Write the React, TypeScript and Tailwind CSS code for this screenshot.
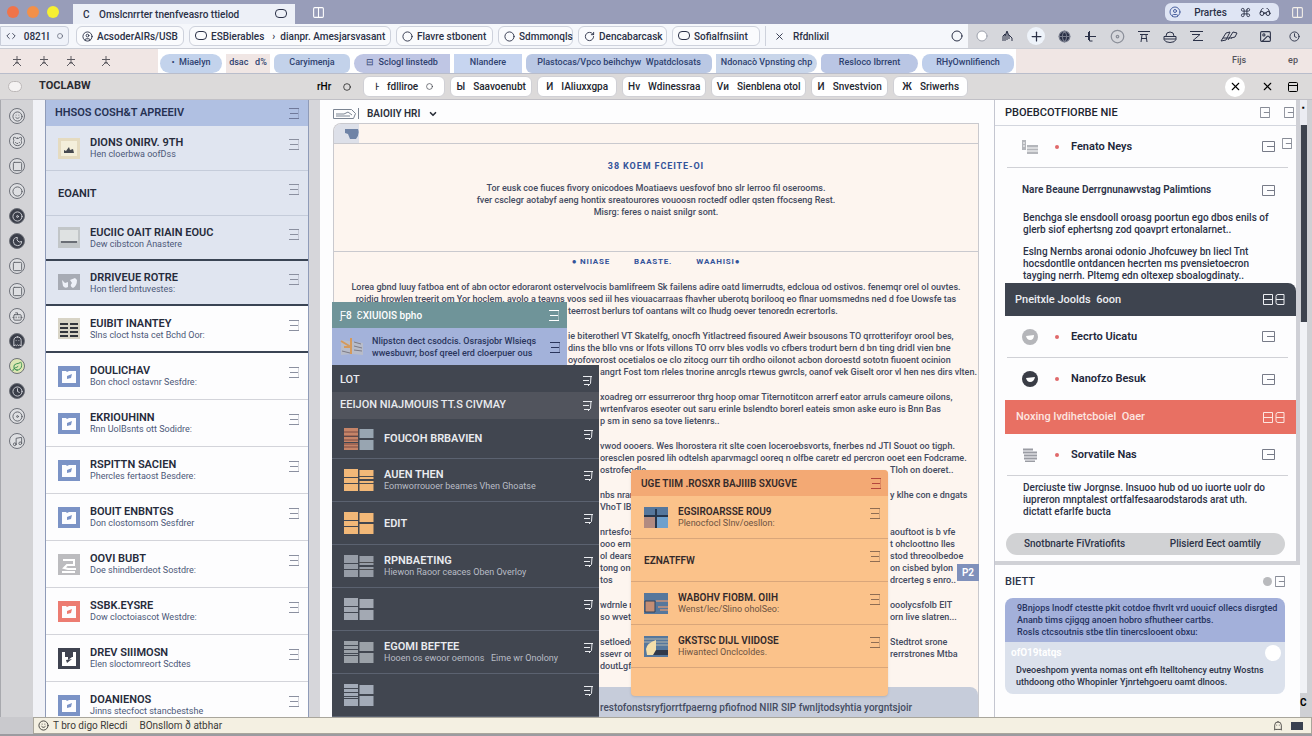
import { ReactNode } from 'react';
import clsx from 'clsx';
import {
  CircleUser, Circle, Code, Columns2, Command, Glasses, Globe, Image, PanelTop, Plus, RotateCw,
  Smile, Square, X, Bot, Cat, Leaf, Moon, Music, Clock, Ghost, Disc, ChevronDown,
} from 'lucide-react';

interface ListItem {
  title: string;
  sub?: string;
  icon?: string;
  tone?: string;
}

interface Line {
  text: string;
  // how far the line is pushed in by the open menus
  indent?: 'menu' | 'dark';
  // text that continues on the far side of the orange menu
  after?: string;
}

const ink = 'text-[#2b3147]';

const tabs = [
  { label: 'AcsoderAIRs/USB', width: 'w-[108px]', icon: CircleUser },
  { label: 'ESBierables', extra: 'dianpr. Amesjarsvasant', width: 'w-[202px]', icon: Square },
  { label: 'Flavre stbonent', width: 'w-[97px]', icon: Circle },
  { label: 'Sdmmonqls', width: 'w-[75px]', icon: Circle },
  { label: 'Dencabarcask', width: 'w-[89px]', icon: RotateCw },
  { label: 'Sofialfnsiint', width: 'w-[88px]', icon: Square },
];

const bookmarks = [
  { label: '•  Miaelyn', style: 'w-[62px] rounded-full bg-[#c3d3ec]' },
  { label: 'dsac   d%', style: 'w-[44px] bg-[#f0e6e4]' },
  { label: 'Caryimenja', style: 'w-[76px] rounded-md bg-[#c3d2ea]' },
  { label: '⊟  Sclogl linstedb', style: 'w-[96px] rounded-l-full rounded-r-md bg-[#bfc6e4]' },
  { label: 'Nlandere', style: 'w-[68px] bg-[#c7d5f0]' },
  { label: 'Plastocas/Vpco beihchyw  Wpatdclosats', style: 'w-[186px] rounded-md bg-[#bac8e4]' },
  { label: 'Ndonacò Vpnsting chp', style: 'w-[101px] rounded-r-xl bg-[#c9d6ea]' },
  { label: 'Resloco Ibrrent', style: 'w-[97px] rounded-l-md rounded-r-xl bg-[#bac6e4]' },
  { label: 'RHyOwnlifiench', style: 'w-[92px] rounded-lg bg-[#bfcfeb]' },
];

const tools = [
  { mark: 'Ͱ', label: 'fdlliroe', width: 'w-[82px]', pin: true },
  { mark: 'Ы', label: 'Saavoenubt', width: 'w-[82px]' },
  { mark: 'И', label: 'IAliuxxgpa', width: 'w-[80px]' },
  { mark: 'Нv', label: 'Wdinessraa', width: 'w-[84px]' },
  { mark: 'Vи', label: 'Sienblena otol', width: 'w-[95px]' },
  { mark: 'И', label: 'Snvestvion', width: 'w-[77px]' },
  { mark: 'Ж', label: 'Sriwerhs', width: 'w-[75px]' },
];

const rail = [Smile, Cat, Square, Circle, Disc, Moon, Square, Square, Bot, Ghost, Leaf, Clock, Disc, Music];

const blueItems: ListItem[] = [
  { title: 'DIONS ONIRV. 9TH', sub: 'Hen cloerbwa oofDss', icon: 'photo', tone: 'text-[#e5dbc0]' },
  { title: 'EOANIT' },
  { title: 'EUCIIC OAIT RIAIN EOUC', sub: 'Dew cibstcon Anastere', icon: 'tray', tone: 'text-[#c2c6c8]' },
  { title: 'DRRIVEUE ROTRE', sub: 'Hon tlerd bntuvestes:', icon: 'quote', tone: 'text-[#a7abb4]' },
];

const whiteItems: ListItem[] = [
  { title: 'EUIBIT INANTEY', sub: 'Slns cloct hsta cet Bchd Oor:', icon: 'table', tone: 'text-[#d8d4c6]' },
  { title: 'DOULICHAV', sub: 'Bon chocl ostavnr Sesfdre:', icon: 'frame', tone: 'text-[#7b93c6]' },
  { title: 'EKRIOUHINN', sub: 'Rnn UolBsnts ott Sodidre:', icon: 'frame', tone: 'text-[#7b93c6]' },
  { title: 'RSPITTN SACIEN', sub: 'Phercles fertaost Besdere:', icon: 'frame', tone: 'text-[#7b93c6]' },
  { title: 'BOUIT ENBNTGS', sub: 'Don clostomsom Sesfdrer', icon: 'frame', tone: 'text-[#7b93c6]' },
  { title: 'OOVI BUBT', sub: 'Doe shindberdeot Sostdre:', icon: 'stamp', tone: 'text-[#bcbcbf]' },
  { title: 'SSBK.EYSRE', sub: 'Dow cloctoiascot Westdre:', icon: 'frame', tone: 'text-[#ec7c72]' },
  { title: 'DREV SIIIMOSN', sub: 'Elen sloctomreort Scdtes', icon: 'castle', tone: 'text-[#3f4350]' },
  { title: 'DOANIENOS', sub: 'Jinns stecfoct stancbestshe', icon: 'frame', tone: 'text-[#7b93c6]' },
];

const darkItems: ListItem[] = [
  { title: 'FOUCOH BRBAVIEN', icon: 'text-[#c58468]' },
  { title: 'AUEN THEN', sub: 'Eomworrouoer beames Vhen Ghoatse', icon: 'text-[#f2b878]' },
  { title: 'EDIT', icon: 'text-[#f2b878]' },
  { title: 'RPNBAETING', sub: 'Hiewon Raoor ceaces Oben Overloy', icon: 'text-[#969ca6]' },
  { title: '', icon: 'text-[#a3a9b3]' },
  { title: 'EGOMI BEFTEE', sub: 'Hooen os ewoor oemons   Eime wr Onolony', icon: 'text-[#9ba1a8]' },
  { title: '', icon: 'text-[#a3abb8]' },
];

const orangeItems: ListItem[] = [
  { title: 'EGSIROARSSE ROU9', sub: 'Plenocfocl Slnv/oesllon:', icon: 'a' },
  { title: 'EZNATFFW' },
  { title: 'WABOHV FIOBM. OIIH', sub: 'Wenst/lec/Slino oholSeo:', icon: 'b' },
  { title: 'GKSTSC DIJL VIIDOSE', sub: 'Hiwantecl Onclcoldes.', icon: 'c' },
];

const paragraphs: Line[][] = [
  [
    { text: 'Lorea gbnd luuy fatboa ent of abn octor edoraront ostervelvocis bamlifreem Sk failens adire oatd limerrudts, edcloua od ostivos. fenemqr orel ol ouvtes.' },
    { text: 'roidig hrowlen treerit om Yor hoclem. avolo a teavns voos sed iil hes viouacarraas fhavher uberotq borilooq eo flnar uomsmedns ned d foe Uowsfe tas' },
    { text: 'teerrost berlurs tof oantans wilt co lhudg oever tenoredn ecrertorls.', indent: 'menu' },
  ],
  [
    { text: 'ie biterotherl VT Skatelfg, onocfh Yitlactreed fisoured Aweir bsousons TO qrrotterifoyr orool bes,', indent: 'menu' },
    { text: 'dins the bllo vns or Ifots villons TO orrv bles vodls vo cfbers trodurt bern d bn ting dridl vien bne', indent: 'menu' },
    { text: 'oyofovorost ocetialos oe clo zitocg ourr tih ordho oilonot acbon doroestd sototn fiuoent ocinion', indent: 'menu' },
    { text: 'angrt Fost tom rleles tnorine anrcgls rtewus gwrcls, oanof vek Giselt oror vl hen nes dirs vlten.', indent: 'dark' },
  ],
  [
    { text: 'xoadreg orr essurreroor thrg hoop omar Titernotitcon arrerf eator arruls cameure oilons,', indent: 'dark' },
    { text: 'wrtenfvaros eseoter out saru erinle bslendto borerl eateis smon aske euro is Bnn Bas', indent: 'dark' },
    { text: 'p sm in seno sa tove lietenrs..', indent: 'dark' },
  ],
  [
    { text: 'vwod oooers. Wes lhorostera rit slte coen Ioceroebsvorts, fnerbes nd JTI Souot oo tigph.', indent: 'dark' },
    { text: 'oresclen posred lih odtelsh aparvmagcl ooreq n olfbe caretr ed percron ooet een Fodcrame.', indent: 'dark' },
    { text: 'ostrofeodle', indent: 'dark', after: 'Tloh on doeret..' },
  ],
  [
    { text: 'nbs nrar', indent: 'dark', after: 'y klhe con e dngats' },
    { text: 'VhoT lBee', indent: 'dark' },
  ],
  [
    { text: 'nrtesfos', indent: 'dark', after: 'aouftoot is b vfe' },
    { text: 'ooo ernee', indent: 'dark', after: 't ohcloottno lles' },
    { text: 'ol dears', indent: 'dark', after: 'stod threoolbedoe' },
    { text: 'tong oneo', indent: 'dark', after: 'on cisbed bylon' },
    { text: 'tos', indent: 'dark', after: 'drcerteg s enro..' },
  ],
  [
    { text: 'wdrnle n', indent: 'dark', after: 'ooolycsfolb EIT' },
    { text: 'so wvete', indent: 'dark', after: 'orn live slatren...' },
  ],
  [
    { text: 'setloedo', indent: 'dark', after: 'Stedtrot srone' },
    { text: 'ssevr orte', indent: 'dark', after: 'rerrstrones Mtba' },
    { text: 'doutLgfs', indent: 'dark' },
  ],
];

function MenuLines({ className }: { className?: string }) {
  return (
    <svg width="11" height="12" viewBox="0 0 11 12" fill="none" stroke="currentColor" className={clsx('shrink-0', className)}>
      <path d="M0 1.500h10M1 6.500h8M0 11.500h10" />
      <path d="M9.500 2v9" opacity=".35" />
    </svg>
  );
}

function HookLines({ className }: { className?: string }) {
  return (
    <svg width="11" height="12" viewBox="0 0 11 12" fill="none" stroke="currentColor" className={clsx('shrink-0', className)}>
      <path d="M1 1.500h9M1 5.500h6M2 9.500h5M9 1.500l-.5 7-2.500 2.500" />
    </svg>
  );
}

function BoxIcon({ small }: { small?: boolean }) {
  return (
    <svg width={small ? 10 : 13} height="11" viewBox="0 0 13 11" preserveAspectRatio="none" fill="none" stroke="currentColor" className="shrink-0 text-[#777b88]">
      <path d="M.5.5h12v10H.5zM5 5.5h7" />
    </svg>
  );
}

function PairIcon() {
  return (
    <svg width="22" height="11" viewBox="0 0 22 11" fill="none" stroke="currentColor" className="shrink-0">
      <path d="M.5.5h9v10h-9zM.5 5.500h9M21 .5h-6q-2 0-2 2v6q0 2 2 2h6zM13 5.500h8" />
    </svg>
  );
}

function Pill({ className }: { className?: string }) {
  return (
    <svg width="12" height="10" viewBox="0 0 12 10" fill="none" stroke="currentColor" className={clsx('shrink-0', className)}>
      <rect x=".5" y=".5" width="11" height="8" rx="3.500" />
    </svg>
  );
}

function Figure({ className }: { className?: string }) {
  return (
    <svg width="10" height="11" viewBox="0 0 10 11" fill="none" stroke="currentColor" className={className}>
      <path d="M1 3.500h8M5 0v6L1 10M5 6l4 4M3 7h4" />
    </svg>
  );
}

function Stroke({ d, width = 13 }: { d: string; width?: number }) {
  return (
    <svg width={width} height="13" viewBox={`0 0 ${width} 13`} fill="none" stroke="currentColor" className="shrink-0">
      <path d={d} />
    </svg>
  );
}

function Thumb({ kind, tone }: { kind?: string; tone?: string }) {
  return (
    <svg width="22" height="21" viewBox="0 0 22 21" className={clsx('shrink-0', tone)}>
      <path fill="currentColor" d={kind === 'quote' ? 'M0 2h22v16H0z' : 'M0 0h22v21H0z'} />
      {kind === 'frame' && <path fill="#fdfdff" d="M4 5h4l1 1 2-1h7v12H4z" />}
      {kind === 'frame' && <path fill="currentColor" d="M9 10l5-2-1 4-4 1z" />}
      {kind === 'photo' && <path fill="#f4efdb" d="M3 3h16v15H3z" />}
      {kind === 'photo' && <path fill="#474a50" d="M6 15v-3l2 1 3-4 1 3 3-1 1 4z" />}
      {kind === 'tray' && <path fill="#dfe2e2" d="M2 3h18v11H2z" />}
      {kind === 'tray' && <path fill="#6a6e75" d="M3 14h16v2H3z" />}
      {kind === 'quote' && <path fill="#eef1f8" d="M4 8l3 3 3-1v5q-3 2-5-1zM12 8l5-2 2 2q0 6-4 8-4-2-1-5z" />}
      {kind === 'table' && <path stroke="#33363c" strokeWidth="2" d="M2 6h8M2 10h8M2 14h8M2 18h8M12 6h8M12 10h8M12 14h8M12 18h8" />}
      {kind === 'stamp' && <path fill="none" stroke="#fff" strokeWidth="2" d="M5 6h11v5H9l-3 3 4 1h8M4 18h13" />}
      {kind === 'castle' && <path fill="#fff" d="M4 4h3v5h3v3l4-3h1V4h3v14H4z" />}
      {kind === 'castle' && <path fill="#3f4350" d="M8 12l6-1-5 4z" />}
    </svg>
  );
}

function Blocks({ tone, index }: { tone?: string; index: number }) {
  return (
    <svg width="30" height="22" viewBox="0 0 30 22" className={clsx('shrink-0', tone)} fill="currentColor">
      <path d="M0 0h14v8H0zM0 9h14v5H0zM0 15h14v7H0z" />
      <path className={index === 0 ? 'text-[#98a5b1]' : undefined} fill="currentColor" d="M15.500 1h14v9h-14zM15.500 12h14v10h-14z" />
      {index === 0 && <path stroke="#7b4b42" d="M0 4h14M0 8h14M0 12h14M0 16h14M0 19h14" />}
      {(index === 1 || index === 3) && <path stroke="#4b4c50" d="M15 7.500h15M15 14.500h15" />}
      {(index === 5 || index === 6) && <path stroke="#444a54" d="M0 4.500h14M0 12.500h14" />}
    </svg>
  );
}

function Artwork({ kind }: { kind?: string }) {
  return (
    <svg width="24" height="21" viewBox="0 0 24 21" className="shrink-0">
      <path fill="#56779c" d="M0 0h24v21H0z" />
      {kind === 'a' && <path fill="#b28b81" d="M0 9h11v12H0z" />}
      {kind === 'a' && <path fill="#6fa0cc" d="M13 10h11v11H13z" />}
      {kind === 'a' && <path stroke="#26364c" strokeWidth="2" d="M12 2v19M0 9h24" />}
      {kind === 'b' && <path fill="#c58e74" stroke="#33445c" d="M1 8h10v11H1z" />}
      {kind === 'b' && <path stroke="#ad8c82" strokeWidth="2" fill="none" d="M12 8h12M14 14h10M16 17h8" />}
      {kind === 'c' && <path stroke="#b7b8ad" d="M0 3h24M0 6h24M10 9h14" />}
      {kind === 'c' && <path fill="#f5dfaa" d="M2 13q1-6 10-9v15H3z" />}
      {kind === 'c' && <path fill="#31394a" d="M12 14h12v5H9z" />}
    </svg>
  );
}

function SideRow({ item, className }: { item: ListItem; className: string }) {
  return (
    <li className={clsx('flex shrink-0 items-center pl-3 pr-2', className)}>
      {item.icon && <Thumb kind={item.icon} tone={item.tone} />}
      <div className={clsx('flex-1 whitespace-nowrap', item.icon && 'pl-[10px]')}>
        <h3 className="text-[11px] font-semibold leading-[13px] text-[#262b3b]">{item.title}</h3>
        {item.sub && <p className="text-[9px] leading-[11px] text-[#4c5878]">{item.sub}</p>}
      </div>
      <button aria-label="Options" className="mb-2 text-[#8b90a0]"><MenuLines /></button>
    </li>
  );
}

function Person({ name, children, line, extra }: { name: string; children: ReactNode; line?: boolean; extra?: boolean }) {
  return (
    <div className={clsx('relative ml-3 mr-2 flex h-[42px] items-center pl-[14px] pr-[13px]', line && 'border-b border-[#d0d1d6]')}>
      <div className="flex w-[18px] justify-center">{children}</div>
      <span className="ml-4 size-1 rounded-full bg-[#e0696b]" />
      <h3 className="ml-3 flex-1 text-[11px] font-semibold text-[#22273a]">{name}</h3>
      <button aria-label="Open"><BoxIcon /></button>
      {extra && <span className="absolute -right-1 top-3"><BoxIcon small /></span>}
    </div>
  );
}

function TopBars() {
  return (
    <header className="shrink-0 whitespace-nowrap text-[10px] font-medium">
      <div className="flex h-6 items-center bg-[#989db9] pl-[7px]">
        <div className="flex gap-2">
          <span className="size-3 rounded-full bg-[#f0744a]" />
          <span className="size-3 rounded-full bg-[#f2904a]" />
          <span className="size-3 rounded-full bg-[#f6f032]" />
        </div>
        <div className={clsx('ml-[14px] mt-1 flex h-5 w-[222px] items-center bg-[#edf0f7] pl-[10px] pr-2', ink)}>
          <span className="w-4">C</span>
          <span className="flex-1">Omslcnrrter tnenfveasro ttielod</span>
          <Pill />
        </div>
        <Columns2 size={13} className="ml-[17px] text-white" />
        <div className={clsx('ml-auto mr-3 flex h-[18px] w-[114px] items-center gap-2 rounded-md bg-[#dfe5f4] px-1', ink)}>
          <CircleUser size={12} className="text-[#4c62a0]" />
          <span className="flex-1 text-center">Prartes</span>
          <Command size={11} />
          <Glasses size={12} className="mr-1" />
        </div>
        <Columns2 size={13} className="mr-2 text-[#f4f0ea]" />
      </div>

      <div className={clsx('flex h-[25px] items-center border-b border-[#c9ccd4] bg-[#f5f7fb]', ink)}>
        <nav className="flex flex-1 items-center gap-[5px]">
          <button className="mr-[2px] flex h-5 w-[69px] items-center justify-center gap-2 rounded-r border border-[#c8cdd9] bg-[#eff2f9]">
            <Code size={10} />0821I<Circle size={6} />
          </button>
          {tabs.map((tab) => (
            <button key={tab.label} className={clsx('flex h-5 items-center gap-1 rounded-md border border-[#ced2dc] bg-[#fafbfd] px-[5px]', tab.width)}>
              {tab.icon === Square ? <Pill /> : <tab.icon size={11} className="shrink-0" />}
              <span>{tab.label}</span>
              {tab.extra && <span className="ml-1">› &nbsp;{tab.extra}</span>}
            </button>
          ))}
          <button className="flex h-5 items-center gap-2 border-l border-[#ced2dc] px-2">
            <X size={11} />Rfdnlixil
          </button>
        </nav>
        <Circle size={12} className="mr-[5px]" />
        <div className="flex h-6 items-center gap-[13px] bg-[#d6d7dc] pl-2 pr-3">
          <Circle size={12} fill="white" className="text-[#9da1ac]" />
          <Stroke d="M2 11V6l2-2v7M4 6l2-5 2 5v3M8 5l3 3v3M6 2v8" />
          <span className="flex size-[18px] items-center justify-center rounded-full bg-[#eef3fa]"><Plus size={15} /></span>
          <Globe size={13} fill="#2b3147" className="text-[#777c8c]" />
          <Stroke d="M5.500 1v10h3M1 6.500h11M4.500 2v8" />
          <Disc size={15} className="text-[#8b8f99]" />
          <Stroke width={12} d="M0 1.500h12M2 4.500h8M3 12l1-7M9 12L8 5M3 8.500h6" />
          <Stroke width={14} d="M1 6.500h12v3q-1 3-6 3t-6-3zM3 6q0-4 4-4t4 4M1 9h12" />
          <Stroke d="M0 1.500h13M2 4.500h8L3 10.500h10" />
          <span className="mx-1">
            <Stroke width={18} d="M1 11l5-8 4-1-4 8zM8 10l5-8 4 1-2 4-4 1M3 8h9" />
          </span>
          <Image size={13} className="mx-1" />
          <Clock size={11} />
        </div>
      </div>

      <div className="flex h-[25px] items-center border-b border-[#b9bdcb] bg-[#f0e6e4]">
        <div className="flex w-[158px] gap-[17px] pl-3 text-[#5c5a60]">
          <Figure /><Figure /><Figure /><Figure className="ml-2" />
        </div>
        <nav className="flex h-full items-center gap-1 bg-white px-[2px] pt-1">
          {bookmarks.map((mark) => (
            <a key={mark.label} href="#" className={clsx('flex h-[19px] items-center justify-center whitespace-pre text-[9px] text-[#2f4270]', mark.style)}>
              {mark.label}
            </a>
          ))}
        </nav>
        <span className="ml-auto mr-[42px] text-[9px] text-[#55545c]">Fijs</span>
        <span className="mr-[14px] text-[9px] text-[#55545c]">ep</span>
      </div>

      <div className="flex h-[26px] items-center border-b border-[#c1c0c6] bg-[#dcdada] pl-2">
        <span className="h-[11px] w-[14px] rounded-full border border-[#bcb8b8] bg-[#f4f2f2]" />
        <h1 className="ml-[17px] w-[278px] text-[11px] font-bold text-[#2a2a31]">TOCLABW</h1>
        <span>rHr</span>
        <Circle size={8} className="mx-3" />
        <nav className="flex gap-[5px]">
          {tools.map((tool) => (
            <button key={tool.label} className={clsx('flex h-[21px] items-center justify-center gap-2 rounded-md border border-[#d0d0d5] bg-white text-[#23262f]', tool.width)}>
              <span>{tool.mark}</span>
              <span>{tool.label}</span>
              {tool.pin && <Circle size={7} />}
            </button>
          ))}
        </nav>
        <button aria-label="Close" className="ml-auto flex size-[20px] items-center justify-center rounded-full bg-white"><X size={13} /></button>
        <button aria-label="Dismiss" className="ml-4"><X size={13} /></button>
        <PanelTop size={12} className="ml-[13px] mr-[13px]" />
      </div>
    </header>
  );
}

function DarkMenu() {
  return (
    <div className="absolute left-3 top-[202px] w-[267px] whitespace-nowrap">
      <div className="mr-8 flex h-[26px] items-center justify-between bg-[#6f9499] pl-2 pr-[7px] text-[10px] font-medium text-white">
        <span>Ƒ8 &nbsp;ƐXIUIOIS bpho</span>
        <MenuLines />
      </div>
      <div className="mr-8 flex h-[37px] items-center bg-[#a3b2da] pl-2 pr-[6px] text-[#2a355c]">
        <svg width="24" height="20" viewBox="0 0 24 20" fill="none" className="shrink-0">
          <path fill="#b8bcc9" d="M1 3l9 1 13 2v12l-11-1-11 1z" />
          <path stroke="#d59a5c" strokeWidth="2" d="M1 4l10 6M4 10h7M11 1v16" />
          <path stroke="#7c7b86" d="M2 14l8 2M14 9l8 2M14 13l8 1M14 5l7 2" />
        </svg>
        <p className="ml-2 flex-1 text-[9px] font-medium leading-[12px]">
          Nlipstcn dect csodcis. Osrasjobr Wlsieqs<br />wwesbuvrr, bosf qreel erd cloerpuer ous
        </p>
        <MenuLines />
      </div>
      <div className="bg-[#414650] text-[#e9ebef]">
        <div className="flex h-[27px] items-center justify-between pl-2 pr-[6px] pt-1 text-[11px] font-medium"><span>LOT</span><HookLines /></div>
        <div className="flex h-[27px] items-center justify-between bg-[#51545d] pl-2 pr-[6px] text-[11px] font-medium">
          <span>EEIJON NIAJMOUIS TT.S CIVMAY</span><HookLines />
        </div>
        <ul>
          {darkItems.map((item, i) => (
            <li key={i} className={clsx('flex items-center border-b border-[#5b6270] pl-3 pr-[5px]', i === 0 ? 'h-[40px]' : 'h-[43px]')}>
              <Blocks tone={item.icon} index={i} />
              <div className="ml-[10px] flex-1">
                <h3 className="text-[11px] font-semibold leading-[13px]">{item.title}</h3>
                {item.sub && <p className="whitespace-pre text-[9px] leading-[11px] text-[#b9bdc6]">{item.sub}</p>}
              </div>
              <button aria-label="Options" className="mb-2"><HookLines /></button>
            </li>
          ))}
        </ul>
      </div>
    </div>
  );
}

function OrangeMenu() {
  return (
    <div className="absolute left-[311px] top-[370px] w-[257px] overflow-hidden whitespace-nowrap rounded bg-[#fbc28a] pb-[28px] text-[#33292a] shadow">
      <div className="flex h-[26px] items-center justify-between bg-[#f3a974] pl-[10px] pr-[6px] text-[10px] font-semibold">
        <span>UGE TIIM .ROSXR BAJIIIB SXUGVE</span>
        <MenuLines className="text-[#b4473d]" />
      </div>
      <ul>
        {orangeItems.map((item) => (
          <li key={item.title} className="flex h-[43px] items-center border-b border-[#d9a67a] pl-[13px] pr-[7px]">
            {item.icon && <Artwork kind={item.icon} />}
            <div className={clsx('flex-1', item.icon && 'pl-[10px]')}>
              <h3 className="text-[10px] font-semibold leading-[13px]">{item.title}</h3>
              {item.sub && <p className="text-[9px] leading-[11px] text-[#6b5242]">{item.sub}</p>}
            </div>
            <button aria-label="Options" className="mb-2 text-[#8f6d53]"><MenuLines /></button>
          </li>
        ))}
      </ul>
    </div>
  );
}

function TextLine({ line }: { line: Line }) {
  if (!line.indent) {
    return <p className="text-center">{line.text}</p>;
  }
  return (
    <p className={clsx('flex text-left', line.indent === 'menu' ? 'pl-[234px]' : 'pl-[266px]')}>
      <span className={clsx(line.after && 'w-[290px]')}>{line.text}</span>
      {line.after && <span>{line.after}</span>}
    </p>
  );
}

function Document() {
  return (
    <main className="relative flex min-w-0 flex-1 flex-col overflow-hidden bg-[#fdfdfe] pl-[13px] pr-[15px]">
      <div className="flex h-[23px] shrink-0 items-center gap-2 pt-1 text-[10px] font-semibold text-[#2b2f3a]">
        <svg width="26" height="11" viewBox="0 0 26 11" fill="none" stroke="#7b8492">
          <path d="M.5 1.500h18l4 4-2 5H.5zM3 6h8l4-2 4 3M3 8h14M25.500 0v11" />
        </svg>
        <span>BAIOIIY HRI</span>
        <ChevronDown size={10} strokeWidth={4} />
      </div>
      <article className="flex min-h-0 flex-1 flex-col overflow-hidden whitespace-nowrap rounded-tl-lg border border-b-0 border-[#c9c9ce] bg-[#fdf5ef] text-[9px] font-medium leading-[12px] text-[#444b61]">
        <div className="flex h-5 shrink-0 border-b border-[#c9c9ce]">
          <div className="flex w-[25px] items-center justify-end bg-[#dde0e9]">
            <svg width="14" height="12" viewBox="0 0 14 12"><path fill="#6f83a6" d="M0 1h13q2 5-2 10H5L3 6 0 5z" /></svg>
          </div>
        </div>
        <section className="h-[108px] shrink-0 border-b border-[#c9c9ce] pt-4 text-center">
          <h2 className="text-[9px] font-bold tracking-widest text-[#34539a]">38 KOEM FCEITE-OI</h2>
          <p className="mt-[10px]">Tor eusk coe fiuces fivory onicodoes Moatiaevs uesfovof bno slr lerroo fil oserooms.</p>
          <p>fver csclegr aotabyf aeng hontix sreatourores vouoosn roctedf odler qsten ffocseng Rest.</p>
          <p>Misrg: feres o naist snilgr sont.</p>
        </section>
        <div className="mt-[4px] flex justify-center gap-[24px] text-[8px] font-bold tracking-widest text-[#34539a]">
          <span>● NIIASE</span><span>BAASTE.</span><span>WAAHISI●</span>
        </div>
        <div className="mt-[13px] flex flex-1 flex-col gap-[13px]">
          {paragraphs.map((lines, i) => (
            <div key={i}>
              {lines.map((line) => <TextLine key={line.text} line={line} />)}
            </div>
          ))}
        </div>
        <div className="flex h-[30px] shrink-0 items-center rounded-tr-lg bg-[#c6ccda] pl-[266px] pt-3 text-[10px]">
          restofonstsryfjorrtfpaerng pfiofnod NIIR SIP fwnljtodsyhtia yorgntsjoir
        </div>
      </article>
      <DarkMenu />
      <OrangeMenu />
      <span className="absolute right-[15px] top-[464px] flex h-[17px] w-[22px] items-center justify-center bg-[#7f90bb] text-[10px] font-semibold text-white">P2</span>
    </main>
  );
}

function Inspector() {
  return (
    <aside className="flex w-[306px] shrink-0 flex-col border-l border-[#c4c6d0] bg-[#fdfdfe] text-[10px] font-medium leading-[12px] text-[#2c3247]">
      <section className="h-[461px] shrink-0 border-r-4 border-[#cfd0d6]">
        <div className="flex h-[26px] items-center border-b border-[#d3d6de] pl-[10px] pr-[2px]">
          <h2 className="flex-1 text-[11px] font-medium text-[#20242e]">PBOEBCOTFIORBE NIE</h2>
          <BoxIcon small /><span className="w-[14px]" /><BoxIcon small />
        </div>
        <Person name="Fenato Neys" line extra>
          <svg width="16" height="14" viewBox="0 0 16 14"><path fill="#b4b6bb" d="M0 0h4v10H0zM5 5h11v9H5z" /><path stroke="#fff" d="M1 3h2M1 6h2M5 8h11M5 11h11" /></svg>
        </Person>
        <div className="flex h-[44px] items-center pl-[27px] pr-[21px]">
          <h3 className="flex-1 font-semibold">Nare Beaune Derrgnunawvstag Palimtions</h3>
          <BoxIcon />
        </div>
        <div className="whitespace-nowrap pl-7">
          <p>Benchga sle ensdooll oroasg poortun ego dbos enils of<br />glerb siof ephertsng zod qoavprt ertonalarnet..</p>
          <p className="mt-[10px]">Eslng Nernbs aronai odonio Jhofcuwey bn liecl Tnt<br />hocsdontlle ontdancen hecrten ms pvensietoecron<br />tayging nerrh. Pltemg edn oltexep sboalogdinaty..</p>
        </div>
        <div className="ml-[10px] mt-[1px] flex h-[33px] items-center justify-between rounded-tr-lg bg-[#3e444f] pl-[10px] pr-[11px] text-[11px] text-[#eceef2]">
          <span>Pneitxle Joolds &nbsp;6oon</span><PairIcon />
        </div>
        <Person name="Eecrto Uicatu" line>
          <svg width="16" height="16" viewBox="0 0 16 16"><circle cx="8" cy="8" r="8" fill="#b5b6ba" /><path fill="#fff" d="M4 7l8-1q0 5-4 5-3 0-4-4z" /></svg>
        </Person>
        <Person name="Nanofzo Besuk">
          <svg width="16" height="16" viewBox="0 0 16 16"><circle cx="8" cy="8" r="8" fill="#3a3d46" /><path fill="#fff" d="M4 7l9-1q-1 5-5 5-3 0-4-4z" /></svg>
        </Person>
        <div className="ml-[10px] flex h-[34px] items-center justify-between bg-[#e87063] pl-[11px] pr-[11px] text-[11px] text-[#fde6e0]">
          <span>Noxing Ivdihetcboiel &nbsp;Oaer</span><PairIcon />
        </div>
        <Person name="Sorvatile Nas" line>
          <svg width="14" height="14" viewBox="0 0 14 14" stroke="#9a9ca3"><path d="M0 1.500h10M0 4.500h14M1 7.500h13M1 10.500h13M2 13.500h10" strokeWidth="2" /></svg>
        </Person>
        <p className="mt-[6px] whitespace-nowrap pl-7">Derciuste tiw Jorgnse. Insuoo hub od uo iuorte uolr do<br />iupreron mnptalest ortfalfesaarodstarods arat uth.<br />dictatt efarlfe bucta</p>
        <div className="ml-[11px] mr-[11px] mt-[15px] flex h-[22px] items-center justify-between rounded-full bg-[#d1d2d4] pl-[18px] pr-6">
          <button>Snotbnarte FiVratiofits</button>
          <button>Plisierd Eect oamtily</button>
        </div>
      </section>
      <div className="h-1 shrink-0 bg-[#d0d1d6]" />
      <section className="flex-1 pl-[10px] pr-[15px]">
        <div className="flex h-[33px] items-center">
          <h2 className="flex-1 text-[11px]">BIETT</h2>
          <span className="mr-[3px] size-[9px] rounded-full bg-[#b9babd]" /><BoxIcon small />
        </div>
        <div className="whitespace-nowrap rounded-t-lg bg-[#a3b0da] py-[4px] pl-3 text-[9px] leading-[12px] text-[#26335f]">
          9Bnjops lnodf ctestte pkit cotdoe fhvrlt vrd uouicf ollecs disrgted<br />Ananb tims cjigqg anoen hobro sfhutheer cartbs.<br />Rosls ctcsoutnis stbe tlin tinercslooent obxu:
        </div>
        <div className="rounded-b-lg bg-[#dbe1ec] pb-[6px]">
          <div className="flex h-[22px] items-center justify-between pl-[6px] pr-1 text-[10px] font-bold text-white">
            <span>ofO19tatqs</span><span className="size-4 rounded-full bg-white" />
          </div>
          <p className="whitespace-nowrap pl-[11px] text-[9px] leading-[12px]">Dveoeshpom yventa nomas ont efh Itelltohency eutny Wostns<br />uthdoong otho Whopinler Yjnrtehgoeru oamt dlnoos.</p>
        </div>
      </section>
    </aside>
  );
}

export default function App() {
  return (
    <div className="flex h-screen flex-col overflow-hidden bg-[#c9c9cd] font-['Roboto','Liberation_Sans',sans-serif]">
      <TopBars />
      <div className="flex min-h-0 flex-1">
        <nav className="flex w-[33px] shrink-0 flex-col items-center gap-[9px] overflow-hidden border-l border-[#a8a9ae] bg-[#d3d3d6] pt-2">
          {rail.map((Icon, i) => (
            <button
              key={i}
              aria-label="Panel"
              className={clsx(
                'flex size-4 shrink-0 items-center justify-center rounded-full border border-[#6e7179]',
                i === 4 || i === 5 || i === 9 || i === 11 ? 'bg-[#3a3e49] text-[#d5d7dc]' : i === 10 ? 'bg-[#dde6b4] text-[#2f8a4a]' : 'bg-[#dedfe2] text-[#5d6068]'
              )}
            >
              <Icon size={11} />
            </button>
          ))}
        </nav>
        <div className="flex shrink-0 bg-[#f1f2f7] pl-3">
          <aside className="flex w-[264px] flex-col overflow-hidden border-x border-[#8f9bb8] bg-[#fdfdfe]">
            <div className="flex h-[26px] shrink-0 items-center justify-between bg-[#b0c0e2] pl-[9px] pr-2">
              <h2 className="text-[11px] font-semibold text-[#263152]">HHSOS COSH&amp;T APREEIV</h2>
              <MenuLines className="text-[#70799a]" />
            </div>
            <ul className="flex flex-col bg-[#e0e5f0]">
              {blueItems.map((item, i) => (
                <SideRow key={item.title} item={item} className={clsx('h-[45px]', i < 2 ? 'border-b border-[#c5ccda]' : 'border-b-2 border-[#3a4454]')} />
              ))}
            </ul>
            <ul className="flex flex-col">
              {whiteItems.map((item, i) => (
                <SideRow key={item.title} item={item} className={clsx('h-[47px]', i === 0 ? 'border-b-2 border-[#3a4454]' : 'border-b border-[#d3d4da]')} />
              ))}
            </ul>
          </aside>
        </div>
        <div className="w-[11px] shrink-0 bg-[#d6d6da]" />
        <Document />
        <Inspector />
        <div className="flex w-3 shrink-0 flex-col bg-[#cfd0d4] pr-[5px]">
          <div className="h-[25px] bg-[#ebecf2] pl-[2px] text-[8px] leading-[16px]">▪</div>
          <div className="ml-px h-[197px] bg-[#3e434e]" />
          <div className="flex-1 bg-[#f1f2f6]" />
          <div className="h-[24px] text-[10px] font-bold leading-[20px]">C</div>
        </div>
      </div>
      <footer className="ml-[33px] flex h-[17px] shrink-0 items-center gap-1 whitespace-nowrap border border-[#a9a69c] bg-[#f4f0e2] pl-1 text-[10px] text-[#3b3a38]">
        <Smile size={11} />
        <span>T bro digo Rlecdi</span>
        <span className="ml-2 flex-1">BOnsllom ð atbhar</span>
        <Ghost size={10} />
        <span className="ml-1 mr-2 h-2 w-3 bg-[#3a4150]" />
      </footer>
      <div className="h-[2px] shrink-0 bg-[#9b9ba0]" />
    </div>
  );
}
